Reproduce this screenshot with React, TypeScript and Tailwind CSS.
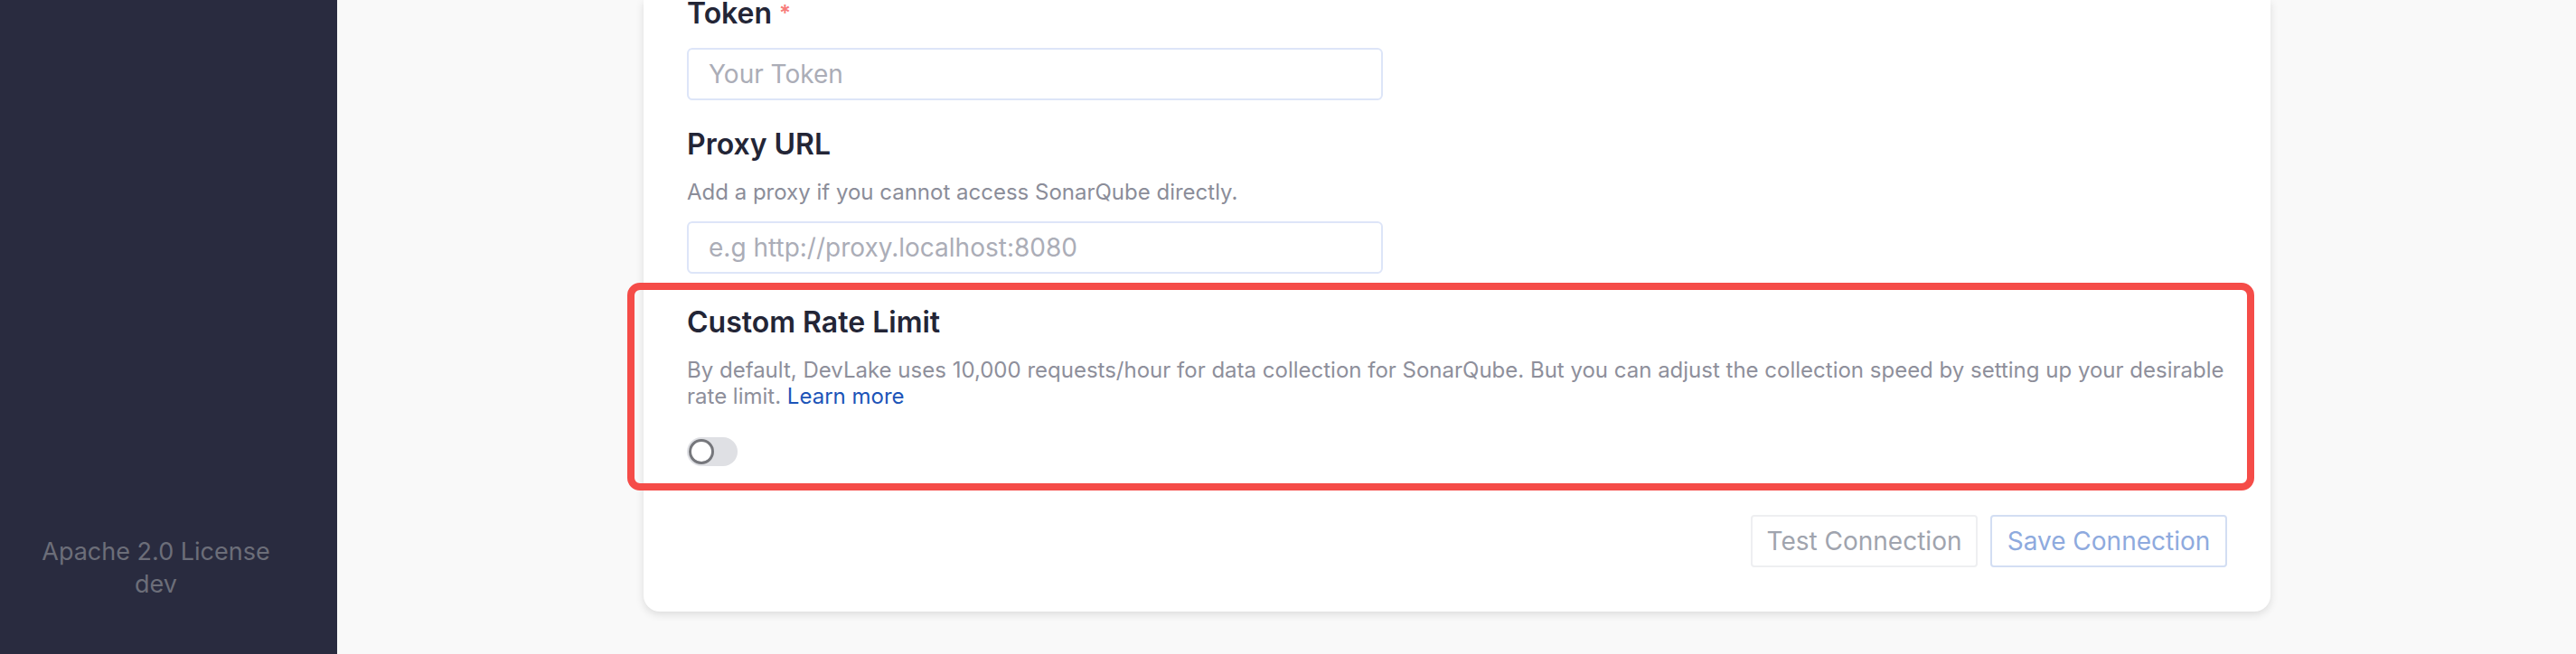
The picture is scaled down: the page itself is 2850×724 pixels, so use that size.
import { useState } from 'react';

const font = { fontFamily: 'Inter, "Noto Sans", sans-serif' };

function Label({ children, required }: { children: React.ReactNode; required?: boolean }) {
  return (
    <div className="text-[32px] leading-[30px] font-semibold text-[#232536]">
      {children}
      {required && <span className="ml-[8px] text-[24px] align-top text-[#f77b7b]">*</span>}
    </div>
  );
}

function TextInput({ placeholder }: { placeholder: string }) {
  return (
    <input
      className="w-[770px] h-[58px] px-[22px] rounded-[6px] border-2 border-[#dde5f8] bg-white text-[28px] text-[#232536] placeholder:text-[#abadb7] outline-none"
      placeholder={placeholder}
    />
  );
}

export default function App() {
  const [rateLimit, setRateLimit] = useState(false);

  return (
    <div className="flex h-[724px] w-[2850px] overflow-hidden bg-[#f9f9f9]" style={font}>
      {/* sidebar */}
      <aside className="w-[373px] shrink-0 bg-[#292b3f] flex flex-col justify-end pb-[59px] pr-[28px] text-center text-[27px] leading-[36px] text-[#6c6e79]">
        <div>Apache 2.0 License</div>
        <div>dev</div>
      </aside>

      <main className="flex-1 pl-[339px]">
        <div className="w-[1800px] bg-white rounded-b-[18px] shadow-[0_3px_10px_rgba(0,0,0,0.12)] px-[48px] pb-[49px]">
          <Label required>Token</Label>
          <div className="mt-[23px]">
            <TextInput placeholder="Your Token" />
          </div>

          <div className="mt-[34px]">
            <Label>Proxy URL</Label>
          </div>
          <p className="mt-[23px] text-[24px] leading-[30px] text-[#8b8d99]">
            Add a proxy if you cannot access SonarQube directly.
          </p>
          <div className="mt-[17px]">
            <TextInput placeholder="e.g http://proxy.localhost:8080" />
          </div>

          {/* highlighted section */}
          <div className="mt-[10px] ml-[-66px] mr-[-30px] border-[8px] border-[#f54c48] rounded-[14px] pl-[58px] pr-[22px] pt-[21px] pb-[19px]">
            <Label>Custom Rate Limit</Label>
            <p className="mt-[23px] text-[24px] leading-[29px] text-[#8e8f9b]">
              By default, DevLake uses 10,000 requests/hour for data collection for SonarQube. But you can adjust the
              collection speed by setting up your desirable rate limit.{' '}
              <a className="text-[#1c54b8]" href="#">
                Learn more
              </a>
            </p>
            <button
              onClick={() => setRateLimit(!rateLimit)}
              className={`mt-[31px] relative block w-[56px] h-[32px] rounded-full ${
                rateLimit ? 'bg-[#7497f7]' : 'bg-[#dfe0e4]'
              }`}
            >
              <span
                className={`absolute top-[2px] w-[28px] h-[28px] rounded-full bg-white border-[3px] border-[#76777c] ${
                  rateLimit ? 'left-[26px]' : 'left-[2px]'
                }`}
              />
            </button>
          </div>

          <div className="mt-[27px] flex justify-end gap-[14px]">
            <button className="h-[58px] w-[251px] rounded-[4px] border-2 border-[#eeeff1] text-[28px] text-[#a0a4ae]">
              Test Connection
            </button>
            <button className="h-[58px] w-[262px] rounded-[4px] border-2 border-[#d3def3] text-[28px] text-[#8eaade]">
              Save Connection
            </button>
          </div>
        </div>
      </main>
    </div>
  );
}
